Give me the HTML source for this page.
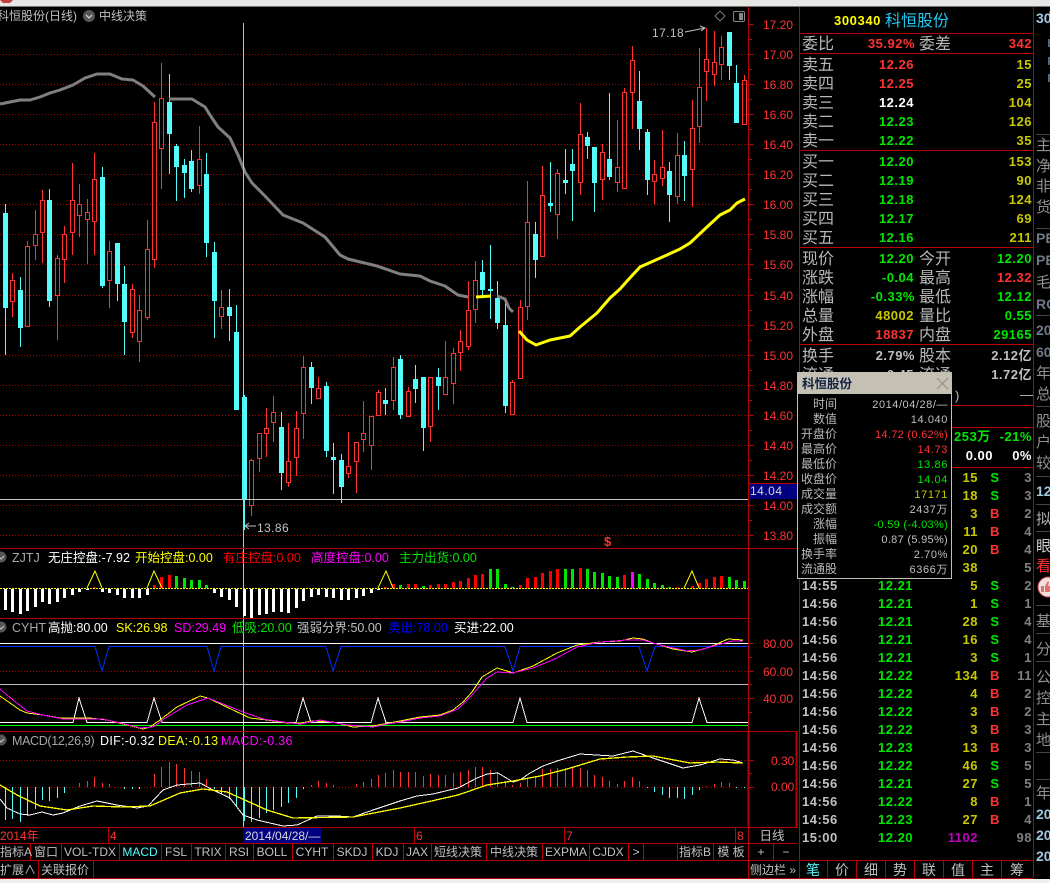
<!DOCTYPE html>
<html lang="zh"><head><meta charset="utf-8"><title>科恒股份</title>
<style>
html,body{margin:0;padding:0;background:#000;width:1050px;height:883px;overflow:hidden}
svg{display:block;position:absolute;left:0;top:0}
text{font-family:"Liberation Sans","Noto Sans CJK SC",sans-serif;font-size:12px;fill:#c0c0c0;white-space:pre}
.r{fill:#ff3232}.gr{fill:#00e600}.y{fill:#ffff00}.dy{fill:#c8c800}.w{fill:#fff}.m{fill:#ff00ff}.c{fill:#54fcfc}.b{fill:#0000ff}.d{fill:#808080}
.L{font-size:16px;fill:#b8b8b8}
.N{font-size:13px;font-weight:bold;letter-spacing:.5px}
.e{text-anchor:end}.mid{text-anchor:middle}
.ax{fill:#ff3232;font-size:12px}
.p{font-size:11px;letter-spacing:.6px}
.pl{font-size:12px;fill:#b8b8b8;text-anchor:end}
.s{font-size:15px;fill:#909090}
.sb{font-size:14px;fill:#6a8fb0;font-weight:bold}
.t{font-size:12.5px}
.q{font-size:12.5px;letter-spacing:.3px}
</style></head><body>
<svg width="1050" height="883" viewBox="0 0 1050 883" xmlns="http://www.w3.org/2000/svg">
<rect width="1050" height="883" fill="#000"/>
<rect width="1050" height="6" fill="#e6e6e4"/><rect y="6" width="1050" height="1" fill="#777"/>
<path d="M0 0h13l-3 3h-7z" fill="#c04040"/>
<g stroke="#a00000" stroke-dasharray="1 2" fill="none">
<path d="M0 54.5H748M0 84.5H748M0 114.5H748M0 144.5H748M0 174.5H748M0 204.5H748M0 234.5H748M0 264.5H748M0 295.5H748M0 325.5H748M0 355.5H748M0 385.5H748M0 415.5H748M0 445.5H748M0 475.5H748M0 505.5H748M0 535.5H748M0 671.5H748M0 698.5H748M0 760.5H748M0 787.5H748"/>
</g>
<g shape-rendering="crispEdges">
<path stroke="#54fcfc" fill="none" d="M5.5 204V355M20.5 277V347M49.5 189V307M102.5 167V288M117.5 243V301M124.5 266V355M169.5 74V174M176.5 144V201M184.5 159V198M191.5 150V192M206.5 153V257M214.5 242V338M229.5 289V341M236.5 305V410M244.5 395V530M281.5 412V490M311.5 362V404M326.5 382V457M333.5 443V494M341.5 454V503M385.5 388V415M400.5 355V419M415.5 365V403M423.5 377V451M438.5 368V410M482.5 260V296M490.5 245V319M497.5 281V329M505.5 302V413M535.5 222V278M550.5 162V212M565.5 149V194M572.5 149V221M587.5 132V159M594.5 147V212M609.5 93V180M639.5 71V150M647.5 129V195M669.5 162V222M684.5 141V201M729.5 32V80M736.5 65V123"/>
<path fill="#54fcfc" d="M3 213h5v95h-5zM18 290h5v38h-5zM47 200h5v101h-5zM100 177h5v109h-5zM115 243h5v41h-5zM122 284h5v38h-5zM167 102h5v32h-5zM174 146h5v21h-5zM182 165h5v8h-5zM189 161h5v28h-5zM204 174h5v69h-5zM212 252h5v49h-5zM227 307h5v9h-5zM234 332h5v78h-5zM242 397h5v102h-5zM279 427h5v46h-5zM309 367h5v21h-5zM324 386h5v65h-5zM331 457h5v3h-5zM339 460h5v27h-5zM383 400h5v4h-5zM398 359h5v56h-5zM413 379h5v10h-5zM421 377h5v51h-5zM436 377h5v9h-5zM480 272h5v18h-5zM488 289h5v2h-5zM495 298h5v25h-5zM503 325h5v81h-5zM533 234h5v26h-5zM548 203h5v3h-5zM563 180h5v3h-5zM570 164h5v7h-5zM585 137h5v9h-5zM592 147h5v36h-5zM607 159h5v18h-5zM637 101h5v28h-5zM645 132h5v48h-5zM667 171h5v24h-5zM682 155h5v21h-5zM727 32h5v34h-5zM734 83h5v40h-5z"/>
<path stroke="#ff3232" fill="none" d="M12.5 273V280M10.5 280.5h4v21h-4zM12.5 302V317M27.5 241V246M25.5 246.5h4v80h-4zM35.5 210V234M33.5 234.5h4v11h-4zM35.5 246V260M42.5 190V200M40.5 200.5h4v32h-4zM42.5 233V263M57.5 255V258M55.5 258.5h4v37h-4zM57.5 296V340M64.5 226V234M62.5 234.5h4v25h-4zM64.5 260V283M72.5 163V200M70.5 200.5h4v32h-4zM72.5 233V255M79.5 184V204M77.5 204.5h4v11h-4zM79.5 216V237M87.5 199V212M85.5 212.5h4v7h-4zM87.5 220V264M94.5 153V179M92.5 179.5h4v42h-4zM94.5 222V255M109.5 241V251M107.5 251.5h4v29h-4zM109.5 281V308M132.5 284V289M130.5 289.5h4v43h-4zM132.5 333V338M139.5 295V310M137.5 310.5h4v31h-4zM139.5 342V362M147.5 220V249M145.5 249.5h4v68h-4zM147.5 318V320M154.5 102V122M152.5 122.5h4v137h-4zM154.5 260V268M161.5 63V98M159.5 98.5h4v50h-4zM161.5 149V189M199.5 126V159M197.5 159.5h4v26h-4zM199.5 186V194M221.5 290V307M219.5 307.5h4v9h-4zM221.5 317V329M251.5 459V460M249.5 460.5h4v45h-4zM251.5 506V516M259.5 433V433M257.5 433.5h4v25h-4zM259.5 459V472M266.5 408V428M264.5 428.5h4v5h-4zM266.5 434V457M273.5 396V412M271.5 412.5h4v10h-4zM273.5 423V442M288.5 423V461M286.5 461.5h4v21h-4zM288.5 483V487M296.5 411V428M294.5 428.5h4v29h-4zM296.5 458V476M303.5 356V367M301.5 367.5h4v46h-4zM303.5 414V439M318.5 377V388M316.5 388.5h4v10h-4zM348.5 432V466M346.5 466.5h4v7h-4zM348.5 474V478M356.5 442V442M354.5 442.5h4v19h-4zM356.5 462V493M363.5 401V433M361.5 433.5h4v6h-4zM363.5 440V452M371.5 416V416M369.5 416.5h4v29h-4zM371.5 446V470M378.5 390V392M376.5 392.5h4v23h-4zM393.5 357V367M391.5 367.5h4v33h-4zM393.5 401V410M408.5 387V391M406.5 391.5h4v25h-4zM430.5 377V377M428.5 377.5h4v49h-4zM430.5 427V442M445.5 341V377M443.5 377.5h4v17h-4zM453.5 348V353M451.5 353.5h4v30h-4zM453.5 384V404M460.5 330V341M458.5 341.5h4v11h-4zM460.5 353V371M468.5 281V310M466.5 310.5h4v36h-4zM468.5 347V350M475.5 261V280M473.5 280.5h4v29h-4zM475.5 310V323M512.5 380V382M510.5 382.5h4v32h-4zM520.5 300V307M518.5 307.5h4v71h-4zM527.5 181V222M525.5 222.5h4v84h-4zM527.5 307V320M542.5 166V195M540.5 195.5h4v61h-4zM557.5 169V173M555.5 173.5h4v41h-4zM557.5 215V239M580.5 103V134M578.5 134.5h4v48h-4zM580.5 183V195M602.5 144V152M600.5 152.5h4v27h-4zM602.5 180V200M617.5 120V167M615.5 167.5h4v15h-4zM617.5 183V192M624.5 88V92M622.5 92.5h4v96h-4zM632.5 46V60M630.5 60.5h4v32h-4zM632.5 93V129M654.5 160V174M652.5 174.5h4v7h-4zM654.5 182V204M662.5 130V167M660.5 167.5h4v11h-4zM662.5 179V186M677.5 133V155M675.5 155.5h4v41h-4zM677.5 197V204M692.5 100V128M690.5 128.5h4v41h-4zM692.5 170V207M699.5 48V87M697.5 87.5h4v39h-4zM699.5 127V143M706.5 28V59M704.5 59.5h4v12h-4zM706.5 72V101M714.5 31V62M712.5 62.5h4v12h-4zM714.5 75V86M721.5 36V47M719.5 47.5h4v17h-4zM721.5 65V80M744.5 75V80M742.5 80.5h4v44h-4z"/>
</g>
<g fill="none" stroke-linejoin="round">
<path stroke="#808080" stroke-width="3" d="M0 104L10 102L20 100L30 100L40 97L50 93L60 90L73 85L85 78L97 74L110 74L122 79L133 80L143 86L155 97M169 99L192 99L205 107L210 115L218 127L230 138L238 155L245 172L252 183L265 196L283 215L303 223L325 237L340 255L348 259L377 266L400 274L420 276L430 281L445 286L458 295L468 297M497 296L505 299L509 308L513 312"/>
<path stroke="#ffff00" stroke-width="3" d="M476 297L491 296M519 331L527 340L536 345L550 340L570 336L580 327L597 313L610 298L620 289L628 280L640 267L667 255L680 249L690 243L707 227L720 215L730 210L737 203L745 199"/>
</g>
<path d="M243.5 23V828" stroke="#c0c0c0" shape-rendering="crispEdges"/>
<path d="M0 499.5H748" stroke="#c8c8c8" shape-rendering="crispEdges"/>
<!-- ZJTJ -->
<g shape-rendering="crispEdges" stroke-width="3" fill="none">
<path stroke="#fff" d="M5.5 589V610M12.5 589V612M20.5 589V614M27.5 589V611M35.5 589V607M42.5 589V602M49.5 589V604M57.5 589V602M64.5 589V598M72.5 589V595M79.5 589V592M87.5 589V590M102.5 589V592M109.5 589V593M117.5 589V595M124.5 589V598M132.5 589V598M139.5 589V598M147.5 589V595M214.5 589V593M221.5 589V597M229.5 589V600M236.5 589V607M244.5 589V616M251.5 589V618M259.5 589V615M266.5 589V614M273.5 589V612M281.5 589V612M288.5 589V613M296.5 589V608M303.5 589V601M311.5 589V597M318.5 589V595M326.5 589V597M333.5 589V598M341.5 589V600M348.5 589V600M356.5 589V598M363.5 589V596M371.5 589V593M378.5 589V590"/>
<path stroke="#ff0000" d="M94.5 588V587M154.5 588V585M161.5 588V577M169.5 588V575M385.5 588V587M393.5 588V584M408.5 588V584M415.5 588V584M430.5 588V585M438.5 588V584M445.5 588V584M453.5 588V582M460.5 588V581M468.5 588V578M475.5 588V575M482.5 588V574M520.5 588V585M527.5 588V578M535.5 588V577M542.5 588V573M550.5 588V571M557.5 588V569M580.5 588V568M624.5 588V575M677.5 588V587M692.5 588V586M699.5 588V583M706.5 588V579M714.5 588V577M721.5 588V576"/>
<path stroke="#00e600" d="M176.5 588V576M184.5 588V578M191.5 588V580M199.5 588V580M206.5 588V585M400.5 588V585M423.5 588V586M490.5 588V569M497.5 588V569M505.5 588V584M512.5 588V587M565.5 588V569M572.5 588V569M587.5 588V569M594.5 588V572M602.5 588V573M609.5 588V576M617.5 588V577M639.5 588V574M647.5 588V579M654.5 588V583M662.5 588V585M669.5 588V587M729.5 588V577M736.5 588V580M744.5 588V581"/>
<path stroke="#ff00ff" d="M632.5 588V572"/>
</g>
<path d="M0 588.5H748" stroke="#ffff00" stroke-dasharray="2 1" shape-rendering="crispEdges"/>
<path fill="none" stroke="#ffff00" d="M87 588L95 571L102 588M147 588L154 571L162 588M378 588L386 571L393 588M684 588L692 571L699 588"/>
<!-- CYHT -->
<g shape-rendering="crispEdges" fill="none">
<path stroke="#fff" d="M0 643.5H748"/>
<path stroke="#c0c0c0" d="M0 684.5H748"/>
<path stroke="#00ff00" d="M0 725.5H748"/>
</g>
<path fill="none" stroke="#0030ff" shape-rendering="crispEdges" d="M0 646.5H95L102 671L109 646.5H207L214 671L221 646.5H326L333 671L341 646.5H505L513 671L520 646.5H639L647 671L655 646.5H748"/>
<path fill="none" stroke="#fff" shape-rendering="crispEdges" d="M0 722.5H73L79 698L87 722.5H147L154 698L162 722.5H296L303 698L311 722.5H371L378 698L386 722.5H513L520 698L527 722.5H692L699 698L707 722.5H748"/>
<path fill="none" stroke="#ffff00" shape-rendering="crispEdges" d="M0 696L10 703L20 710L27 713L43 715L60 718L90 718L107 720L127 725L143 729L150 727L160 720L177 707L200 696L208 698L233 710L250 718L267 720L287 723L300 723L313 721L333 722L353 727L373 726L400 721L420 717L440 715L453 710L463 702L472 692L482 677L497 668L507 671L513 673L533 666L557 653L577 645L600 642L620 641L633 638L643 639L653 643L673 649L692 652L710 647L728 639L743 640"/>
<path fill="none" stroke="#ff00ff" shape-rendering="crispEdges" d="M0 689L13 700L27 711L43 715L63 719L103 719L120 723L140 728L153 727L167 717L187 705L208 698L243 712L263 719L283 722L300 724L320 720L347 725L373 727L387 724L400 722L420 718L440 716L458 709L472 695L487 678L497 672L512 673L533 668L557 658L577 647L600 642L627 640L643 640L660 645L687 651L700 650L717 645L733 641L743 641"/>
<!-- MACD -->
<g shape-rendering="crispEdges" fill="none">
<path stroke="#54fcfc" d="M5.5 787V820M12.5 787V819M20.5 787V822M27.5 787V816M35.5 787V809M42.5 787V800M49.5 787V801M57.5 787V798M64.5 787V793M124.5 787V789M132.5 787V789M139.5 787V789M214.5 787V789M221.5 787V794M229.5 787V799M236.5 787V807M244.5 787V821M251.5 787V822M259.5 787V818M266.5 787V813M273.5 787V810M281.5 787V807M288.5 787V803M296.5 787V798M303.5 787V789M647.5 787V788M654.5 787V792M662.5 787V795M669.5 787V798M677.5 787V798M684.5 787V799M692.5 787V795M699.5 787V790M736.5 787V788M744.5 787V788"/>
<path stroke="#ff3232" d="M79.5 787V783M87.5 787V781M94.5 787V777M102.5 787V783M109.5 787V784M154.5 787V774M161.5 787V767M169.5 787V762M176.5 787V764M184.5 787V768M191.5 787V771M199.5 787V772M206.5 787V779M311.5 787V785M318.5 787V781M326.5 787V783M333.5 787V785M356.5 787V784M363.5 787V782M371.5 787V779M378.5 787V775M385.5 787V773M393.5 787V770M400.5 787V772M408.5 787V772M415.5 787V772M423.5 787V776M430.5 787V774M438.5 787V775M445.5 787V775M453.5 787V773M460.5 787V772M468.5 787V770M475.5 787V767M482.5 787V767M490.5 787V770M497.5 787V772M505.5 787V781M512.5 787V785M520.5 787V783M527.5 787V778M535.5 787V777M542.5 787V769M550.5 787V769M557.5 787V768M565.5 787V768M572.5 787V768M580.5 787V768M587.5 787V770M594.5 787V775M602.5 787V777M609.5 787V781M617.5 787V784M624.5 787V781M632.5 787V777M639.5 787V781M706.5 787V786M714.5 787V784M721.5 787V782M729.5 787V783"/>
</g>
<path fill="none" stroke="#fff" shape-rendering="crispEdges" d="M0 799L7 808L20 814L30 815L42 812L53 815L63 813L80 806L97 801L117 805L137 808L148 806L163 790L177 785L200 783L213 790L230 798L243 815L257 820L283 826L297 825L317 816L337 816L353 817L373 810L400 801L417 796L433 794L458 788L477 778L487 774L498 773L513 782L520 780L530 773L543 766L557 761L580 754L613 756L633 751L653 758L683 768L700 765L720 759L733 760L743 763"/>
<path fill="none" stroke="#ffff00" stroke-width="1.3" shape-rendering="crispEdges" d="M0 785L17 795L40 806L67 810L93 806L123 807L150 806L180 793L203 789L227 792L267 810L293 818L353 817L400 808L427 802L458 795L487 785L513 781L540 776L567 769L600 759L627 757L653 756L690 763L717 762L743 763"/>
<!-- frames -->
<g shape-rendering="crispEdges" fill="none" stroke="#b80000">
<path d="M0 548.5H797M0 618.5H748M0 731.5H797M0 827.5H797M0 843.5H797M0 860.5H797M0 878.5H1033M799.5 7V878M1033.5 7V878M748.5 7V843M800 33.5H1033M800 53.5H1033M800 150.5H1033M800 247.5H1033M800 344.5H1033M800 405.5H1033M800 427.5H1033M800 467.5H1033M800 860.5H1033"/>
<path d="M796.5 731V827" stroke-width="2"/><path d="M748.5 731V827" stroke-width="2"/>
<path d="M748 24.5h6M748 54.5h6M748 84.5h6M748 114.5h6M748 144.5h6M748 174.5h6M748 204.5h6M748 234.5h6M748 264.5h6M748 295.5h6M748 325.5h6M748 355.5h6M748 385.5h6M748 415.5h6M748 445.5h6M748 475.5h6M748 505.5h6M748 535.5h6M748 39.5h4M748 69.5h4M748 99.5h4M748 129.5h4M748 159.5h4M748 189.5h4M748 219.5h4M748 249.5h4M748 279.5h4M748 310.5h4M748 340.5h4M748 370.5h4M748 400.5h4M748 430.5h4M748 460.5h4M748 490.5h4M748 520.5h4M748 643.5h6M748 657.5h4M748 671.5h6M748 684.5h4M748 698.5h6M748 712.5h4M748 760.5h6M748 773.5h4M748 787.5h6"/>
<path d="M108.5 827V843M414.5 827V843M564.5 827V843M735.5 827V843M30.5 843V860M61.5 843V860M119.5 843V860M161.5 843V860M191.5 843V860M225.5 843V860M253.5 843V860M292.5 843V860M333.5 843V860M372.5 843V860M403.5 843V860M431.5 843V860M486.5 843V860M542.5 843V860M589.5 843V860M628.5 843V860M643.5 843V860M677.5 843V860M713.5 843V860M748.5 843V878M773.5 843V860M38.5 860V878M93.5 860V878M827.5 860V878M856.5 860V878M885.5 860V878M914.5 860V878M943.5 860V878M972.5 860V878M1001.5 860V878"/>
</g>
<rect x="0" y="879" width="1050" height="4" fill="#f0f0ee"/>
<!-- titles -->
<text x="-3" y="20">科恒股份(日线)</text>
<circle cx="89" cy="16" r="6" fill="#555"/><path d="M86 15l3 3 3-3" fill="none" stroke="#ccc" stroke-width="1.3"/>
<text x="99" y="20">中线决策</text>
<path d="M720 11l5 5-5 5-5-5z" fill="none" stroke="#777"/>
<rect x="733.5" y="11.5" width="11" height="10" rx="1.5" fill="none" stroke="#888"/><rect x="739" y="13" width="4" height="7" fill="#888"/>
<text x="652" y="37" style="letter-spacing:.4px">17.18</text>
<path d="M685 32L705 28M700 26l5 2-4 3" fill="none" stroke="#c0c0c0"/>
<text x="257" y="532" style="letter-spacing:.4px">13.86</text>
<path d="M245 526h11M249 523l-4 3 4 3" fill="none" stroke="#c0c0c0"/>
<text x="604" y="546" class="r" style="font-size:13px;font-weight:bold">$</text>
<!-- axis -->
<g>
<text x="763" y="29" class="ax">17.20</text><text x="763" y="59" class="ax">17.00</text><text x="763" y="89" class="ax">16.80</text><text x="763" y="119" class="ax">16.60</text><text x="763" y="149" class="ax">16.40</text><text x="763" y="179" class="ax">16.20</text><text x="763" y="209" class="ax">16.00</text><text x="763" y="239" class="ax">15.80</text><text x="763" y="269" class="ax">15.60</text><text x="763" y="300" class="ax">15.40</text><text x="763" y="330" class="ax">15.20</text><text x="763" y="360" class="ax">15.00</text><text x="763" y="390" class="ax">14.80</text><text x="763" y="420" class="ax">14.60</text><text x="763" y="450" class="ax">14.40</text><text x="763" y="480" class="ax">14.20</text><text x="763" y="510" class="ax">14.00</text><text x="763" y="540" class="ax">13.80</text>
<text x="763" y="648" class="ax">80.00</text><text x="763" y="676" class="ax">60.00</text><text x="763" y="703" class="ax">40.00</text>
<text x="771" y="765" class="ax">0.30</text><text x="771" y="791" class="ax">0.00</text>
</g>
<rect x="749" y="483" width="48" height="16" fill="#000080"/><path d="M749 483.5H800" stroke="#b80000" shape-rendering="crispEdges"/>
<text x="750" y="495" style="letter-spacing:.5px;fill:#d8d8d8">14.04</text>
<!-- indicator labels -->
<circle cx="1" cy="557" r="5.5" fill="#555"/><path d="M-2 556l3 3 3-3" fill="none" stroke="#ccc"/>
<text x="12" y="562" class="t" style="fill:#a8a8a8">ZJTJ</text>
<text x="48" y="562" class="t w">无庄控盘:-7.92</text>
<text x="135" y="562" class="t y">开始控盘:0.00</text>
<text x="223" y="562" class="t" style="fill:#f00">有庄控盘:0.00</text>
<text x="311" y="562" class="t m">高度控盘:0.00</text>
<text x="399" y="562" class="t gr">主力出货:0.00</text>
<circle cx="1" cy="627" r="5.5" fill="#555"/><path d="M-2 626l3 3 3-3" fill="none" stroke="#ccc"/>
<text x="12" y="632" class="t" style="fill:#a8a8a8">CYHT</text>
<text x="48" y="632" class="t w">高抛:80.00</text>
<text x="116" y="632" class="t y">SK:26.98</text>
<text x="174" y="632" class="t m">SD:29.49</text>
<text x="232" y="632" class="t gr">低吸:20.00</text>
<text x="297" y="632" class="t">强弱分界:50.00</text>
<text x="388" y="632" class="t b">卖出:78.00</text>
<text x="454" y="632" class="t w">买进:22.00</text>
<circle cx="1" cy="740" r="5.5" fill="#555"/><path d="M-2 739l3 3 3-3" fill="none" stroke="#ccc"/>
<text x="12" y="745" class="t" style="fill:#a8a8a8;letter-spacing:-.35px">MACD(12,26,9)</text>
<text x="100" y="745" class="q w">DIF:-0.32</text>
<text x="158" y="745" class="q y">DEA:-0.13</text>
<text x="221" y="745" class="q m">MACD:-0.36</text>
<!-- date row -->
<rect x="243" y="828" width="78" height="15" fill="#000080"/>
<text x="0" y="840" class="r">2014年</text><text x="110" y="840" class="r">4</text>
<text x="245" y="840" style="fill:#d8d8d8">2014/04/28/—</text>
<text x="416" y="840" class="r">6</text><text x="566" y="840" class="r">7</text><text x="737" y="840" class="r">8</text>
<text x="772" y="840" class="mid t">日线</text>
<!-- tabs -->
<g>
<text x="0" y="856">指标A</text><text x="34" y="856">窗口</text><text x="90" y="856" class="mid">VOL-TDX</text><text x="140" y="856" class="mid c">MACD</text><text x="176" y="856" class="mid">FSL</text><text x="208" y="856" class="mid">TRIX</text><text x="239" y="856" class="mid">RSI</text><text x="272" y="856" class="mid">BOLL</text><text x="312" y="856" class="mid">CYHT</text><text x="352" y="856" class="mid">SKDJ</text><text x="387" y="856" class="mid">KDJ</text><text x="417" y="856" class="mid">JAX</text><text x="458" y="856" class="mid">短线决策</text><text x="514" y="856" class="mid">中线决策</text><text x="566" y="856" class="mid">EXPMA</text><text x="608" y="856" class="mid">CJDX</text><text x="636" y="856" class="mid">&gt;</text><text x="695" y="856" class="mid">指标B</text><text x="731" y="856" class="mid">模 板</text><text x="761" y="856" class="mid">+</text><text x="786" y="856" class="mid">−</text>
<text x="0" y="874">扩展∧</text><text x="41" y="874">关联报价</text><text x="750" y="874">侧边栏 »</text>
</g>
<!-- right panel -->
<text x="834" y="25" class="N y" style="letter-spacing:.6px">300340</text>
<text x="885" y="26" class="L" style="fill:#20c8f0">科恒股份</text>
<text x="802" y="49" class="L">委比</text><text x="915" y="48" class="N r e">35.92%</text><text x="919" y="49" class="L">委差</text><text x="1032" y="48" class="N r e">342</text>
<g>
<text x="802" y="70" class="L">卖五</text><text x="914" y="69" class="N r e">12.26</text><text x="1032" y="69" class="N dy e">15</text>
<text x="802" y="89" class="L">卖四</text><text x="914" y="88" class="N r e">12.25</text><text x="1032" y="88" class="N dy e">25</text>
<text x="802" y="108" class="L">卖三</text><text x="914" y="107" class="N w e">12.24</text><text x="1032" y="107" class="N dy e">104</text>
<text x="802" y="127" class="L">卖二</text><text x="914" y="126" class="N gr e">12.23</text><text x="1032" y="126" class="N dy e">126</text>
<text x="802" y="146" class="L">卖一</text><text x="914" y="145" class="N gr e">12.22</text><text x="1032" y="145" class="N dy e">35</text>
<text x="802" y="167" class="L">买一</text><text x="914" y="166" class="N gr e">12.20</text><text x="1032" y="166" class="N dy e">153</text>
<text x="802" y="186" class="L">买二</text><text x="914" y="185" class="N gr e">12.19</text><text x="1032" y="185" class="N dy e">90</text>
<text x="802" y="205" class="L">买三</text><text x="914" y="204" class="N gr e">12.18</text><text x="1032" y="204" class="N dy e">124</text>
<text x="802" y="224" class="L">买四</text><text x="914" y="223" class="N gr e">12.17</text><text x="1032" y="223" class="N dy e">69</text>
<text x="802" y="243" class="L">买五</text><text x="914" y="242" class="N gr e">12.16</text><text x="1032" y="242" class="N dy e">211</text>
<text x="802" y="264" class="L">现价</text><text x="914" y="263" class="N gr e">12.20</text><text x="919" y="264" class="L">今开</text><text x="1032" y="263" class="N gr e">12.20</text>
<text x="802" y="283" class="L">涨跌</text><text x="914" y="282" class="N gr e">-0.04</text><text x="919" y="283" class="L">最高</text><text x="1032" y="282" class="N r e">12.32</text>
<text x="802" y="302" class="L">涨幅</text><text x="915" y="301" class="N gr e">-0.33%</text><text x="919" y="302" class="L">最低</text><text x="1032" y="301" class="N gr e">12.12</text>
<text x="802" y="321" class="L">总量</text><text x="914" y="320" class="N dy e">48002</text><text x="919" y="321" class="L">量比</text><text x="1032" y="320" class="N gr e">0.55</text>
<text x="802" y="340" class="L">外盘</text><text x="914" y="339" class="N r e">18837</text><text x="919" y="340" class="L">内盘</text><text x="1032" y="339" class="N gr e">29165</text>
<text x="802" y="361" class="L">换手</text><text x="915" y="360" class="N e">2.79%</text><text x="919" y="361" class="L">股本</text><text x="1032" y="360" class="N e">2.12亿</text>
<text x="802" y="380" class="L">流通</text><text x="914" y="379" class="N e">6.45</text><text x="919" y="380" class="L">流通</text><text x="1032" y="379" class="N e">1.72亿</text>
<text x="955" y="400" style="font-size:13px">)</text><text x="1020" y="399" style="font-size:13px">—</text>
<text x="954" y="441" class="N gr">253万</text><text x="1032" y="441" class="N gr e">-21%</text>
<text x="993" y="460" class="N w e">0.00</text><text x="1032" y="460" class="N w e">0%</text>
</g>
<!-- ticks -->
<g>
<text x="978" y="482" class="N dy e">15</text><text x="995" y="482" class="N gr mid">S</text><text x="1032" y="482" class="N d e">3</text>
<text x="978" y="500" class="N dy e">18</text><text x="995" y="500" class="N gr mid">S</text><text x="1032" y="500" class="N d e">3</text>
<text x="978" y="518" class="N dy e">3</text><text x="995" y="518" class="N r mid">B</text><text x="1032" y="518" class="N d e">2</text>
<text x="978" y="536" class="N dy e">11</text><text x="995" y="536" class="N r mid">B</text><text x="1032" y="536" class="N d e">4</text>
<text x="978" y="554" class="N dy e">20</text><text x="995" y="554" class="N r mid">B</text><text x="1032" y="554" class="N d e">4</text>
<text x="978" y="572" class="N dy e">38</text><text x="1032" y="572" class="N d e">5</text>
<text x="802" y="590" class="N">14:55</text><text x="878" y="590" class="N gr">12.21</text><text x="978" y="590" class="N dy e">5</text><text x="995" y="590" class="N gr mid">S</text><text x="1032" y="590" class="N d e">2</text>
<text x="802" y="608" class="N">14:56</text><text x="878" y="608" class="N gr">12.21</text><text x="978" y="608" class="N dy e">1</text><text x="995" y="608" class="N gr mid">S</text><text x="1032" y="608" class="N d e">1</text>
<text x="802" y="626" class="N">14:56</text><text x="878" y="626" class="N gr">12.21</text><text x="978" y="626" class="N dy e">28</text><text x="995" y="626" class="N gr mid">S</text><text x="1032" y="626" class="N d e">4</text>
<text x="802" y="644" class="N">14:56</text><text x="878" y="644" class="N gr">12.21</text><text x="978" y="644" class="N dy e">16</text><text x="995" y="644" class="N gr mid">S</text><text x="1032" y="644" class="N d e">4</text>
<text x="802" y="662" class="N">14:56</text><text x="878" y="662" class="N gr">12.21</text><text x="978" y="662" class="N dy e">3</text><text x="995" y="662" class="N gr mid">S</text><text x="1032" y="662" class="N d e">1</text>
<text x="802" y="680" class="N">14:56</text><text x="878" y="680" class="N gr">12.22</text><text x="978" y="680" class="N dy e">134</text><text x="995" y="680" class="N r mid">B</text><text x="1032" y="680" class="N d e">11</text>
<text x="802" y="698" class="N">14:56</text><text x="878" y="698" class="N gr">12.22</text><text x="978" y="698" class="N dy e">4</text><text x="995" y="698" class="N r mid">B</text><text x="1032" y="698" class="N d e">2</text>
<text x="802" y="716" class="N">14:56</text><text x="878" y="716" class="N gr">12.22</text><text x="978" y="716" class="N dy e">3</text><text x="995" y="716" class="N r mid">B</text><text x="1032" y="716" class="N d e">2</text>
<text x="802" y="734" class="N">14:56</text><text x="878" y="734" class="N gr">12.22</text><text x="978" y="734" class="N dy e">3</text><text x="995" y="734" class="N r mid">B</text><text x="1032" y="734" class="N d e">3</text>
<text x="802" y="752" class="N">14:56</text><text x="878" y="752" class="N gr">12.23</text><text x="978" y="752" class="N dy e">13</text><text x="995" y="752" class="N r mid">B</text><text x="1032" y="752" class="N d e">3</text>
<text x="802" y="770" class="N">14:56</text><text x="878" y="770" class="N gr">12.22</text><text x="978" y="770" class="N dy e">46</text><text x="995" y="770" class="N gr mid">S</text><text x="1032" y="770" class="N d e">5</text>
<text x="802" y="788" class="N">14:56</text><text x="878" y="788" class="N gr">12.21</text><text x="978" y="788" class="N dy e">27</text><text x="995" y="788" class="N gr mid">S</text><text x="1032" y="788" class="N d e">5</text>
<text x="802" y="806" class="N">14:56</text><text x="878" y="806" class="N gr">12.22</text><text x="978" y="806" class="N dy e">8</text><text x="995" y="806" class="N r mid">B</text><text x="1032" y="806" class="N d e">1</text>
<text x="802" y="824" class="N">14:56</text><text x="878" y="824" class="N gr">12.23</text><text x="978" y="824" class="N dy e">27</text><text x="995" y="824" class="N r mid">B</text><text x="1032" y="824" class="N d e">4</text>
<text x="802" y="842" class="N">15:00</text><text x="878" y="842" class="N gr">12.20</text><text x="978" y="842" class="N e" style="fill:#c000c0">1102</text><text x="1032" y="842" class="N d e">98</text>
</g>
<g style="font-size:13px">
<text x="813" y="875" class="mid c" style="font-size:14px">笔</text><text x="842" y="875" class="mid" style="font-size:14px">价</text><text x="871" y="875" class="mid" style="font-size:14px">细</text><text x="900" y="875" class="mid" style="font-size:14px">势</text><text x="929" y="875" class="mid" style="font-size:14px">联</text><text x="958" y="875" class="mid" style="font-size:14px">值</text><text x="987" y="875" class="mid" style="font-size:14px">主</text><text x="1017" y="875" class="mid" style="font-size:14px">筹</text>
</g>
<!-- far right strip -->
<g>
<text x="1036" y="23" class="sb" style="fill:#a0c8e0">30</text>
<path d="M1050 11v4M1049 39v8M1049 57v8M1049 74v8" stroke="#a0d0f0" fill="none"/>
<text x="1036" y="150" class="s">主</text><text x="1036" y="171" class="s">净</text><text x="1036" y="191" class="s">非</text><text x="1036" y="212" class="s">货</text>
<text x="1036" y="243" class="sb" style="fill:#707a88">PE</text><text x="1036" y="265" class="sb" style="fill:#707a88">PE</text><text x="1036" y="287" class="s">毛</text><text x="1036" y="309" class="sb" style="fill:#707a88">RO</text>
<text x="1036" y="335" class="sb" style="fill:#707a88">20</text><text x="1036" y="357" class="sb" style="fill:#707a88">60</text><text x="1036" y="378" class="s">年</text><text x="1036" y="399" class="s">总</text>
<text x="1036" y="426" class="s">股</text><text x="1036" y="447" class="s">户</text><text x="1036" y="468" class="s">较</text>
<text x="1036" y="496" class="sb" style="fill:#a0c8e0">12</text>
<text x="1036" y="524" class="s" style="fill:#b0b0b0">拟</text><text x="1036" y="551" class="s" style="fill:#d0d0d0">眼</text><text x="1036" y="571" class="s" style="fill:#ff3232">看</text>
<circle cx="1048" cy="587" r="10" fill="#f0e0e0" stroke="#d04040"/><path d="M1041 586h3v6h-3zM1045 586l3-5 1 1-1 4h2v6h-5z" fill="#e07070"/>
<text x="1036" y="626" class="s">基</text><text x="1036" y="654" class="s">分</text><text x="1036" y="682" class="s">公</text><text x="1036" y="703" class="s">控</text><text x="1036" y="724" class="s">主</text><text x="1036" y="745" class="s">地</text>
<text x="1036" y="798" class="s">年</text><text x="1036" y="819" class="sb" style="fill:#a0c8e0">20</text><text x="1036" y="840" class="sb" style="fill:#a0c8e0">20</text><text x="1036" y="861" class="sb" style="fill:#a0c8e0">20</text>
<path d="M1036 134.5h14M1036 228.5h14M1036 315.5h14M1036 406.5h14M1036 476.5h14M1036 504.5h14M1036 531.5h14M1036 605.5h14M1036 633.5h14M1036 661.5h14M1036 752.5h14M1036 779.5h14" stroke="#444" shape-rendering="crispEdges"/>
</g>
<!-- popup -->
<rect x="797.5" y="372.5" width="154" height="206" fill="#000" stroke="#c4c0b4"/>
<rect x="797" y="372" width="155" height="22" fill="#c4c0b4"/>
<text x="802" y="388" style="font-size:12.5px;font-weight:bold;fill:#102040">科恒股份</text>
<path d="M937 378l11 11M948 378l-11 11" stroke="#8c8c84" fill="none"/>
<text x="837" y="408" class="pl">时间</text><text x="948" y="408" class="p e" style="letter-spacing:.55px">2014/04/28/—</text>
<text x="837" y="423" class="pl">数值</text><text x="948" y="423" class="p e">14.040</text>
<text x="837" y="438" class="pl">开盘价</text><text x="948" y="438" class="p r e" style="letter-spacing:.3px">14.72 (0.62%)</text>
<text x="837" y="453" class="pl">最高价</text><text x="948" y="453" class="p r e">14.73</text>
<text x="837" y="468" class="pl">最低价</text><text x="948" y="468" class="p gr e">13.86</text>
<text x="837" y="483" class="pl">收盘价</text><text x="948" y="483" class="p gr e">14.04</text>
<text x="837" y="498" class="pl">成交量</text><text x="948" y="498" class="p dy e">17171</text>
<text x="837" y="513" class="pl">成交额</text><text x="948" y="513" class="p e">2437万</text>
<text x="837" y="528" class="pl">涨幅</text><text x="948" y="528" class="p gr e" style="letter-spacing:.3px">-0.59 (-4.03%)</text>
<text x="837" y="543" class="pl">振幅</text><text x="948" y="543" class="p e" style="letter-spacing:.3px">0.87 (5.95%)</text>
<text x="837" y="558" class="pl">换手率</text><text x="948" y="558" class="p e">2.70%</text>
<text x="837" y="573" class="pl">流通股</text><text x="948" y="573" class="p e">6366万</text>
</svg>
</body></html>
